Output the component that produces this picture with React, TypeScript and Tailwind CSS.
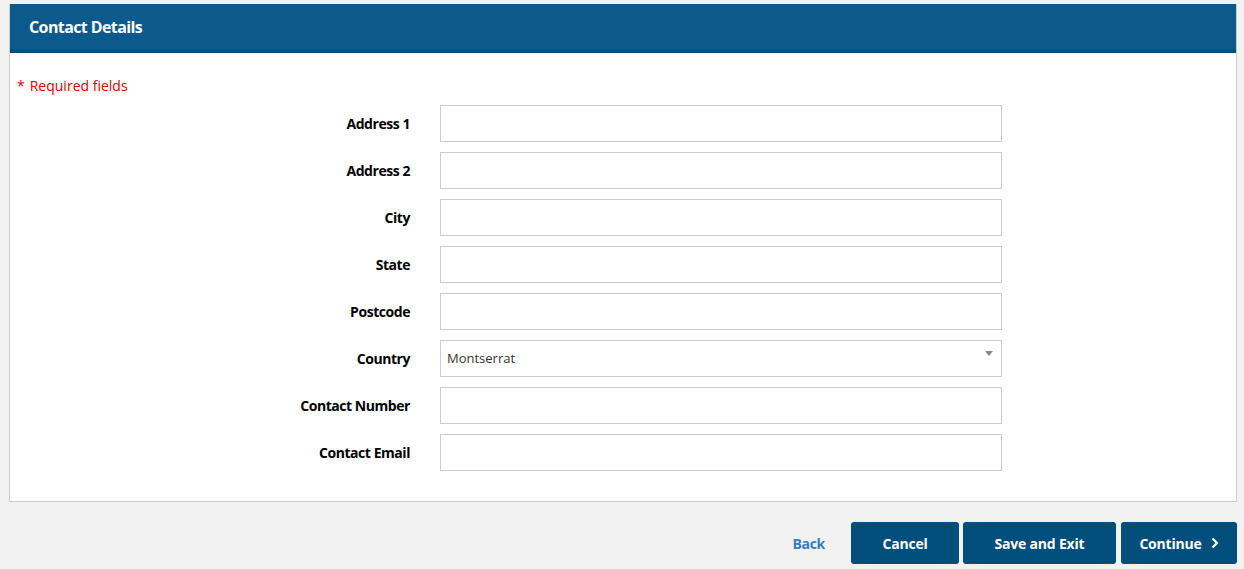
import React from 'react';

const fields = ['Address 1', 'Address 2', 'City', 'State', 'Postcode', 'Country', 'Contact Number', 'Contact Email'];

export default function App() {
  return (
    <div className="min-h-[569px] bg-[#f2f2f2] pt-[4px] px-[9px] pr-[7px]" style={{ fontFamily: '"Open Sans", sans-serif' }}>
      {/* Card */}
      <div className="bg-white border border-[#cccccc] border-t-0">
        <div className="h-[49px] bg-[#0b5a8b] border-b-[4px] border-[#07507d] flex items-center px-[19px]">
          <h2 className="text-white text-[16px] font-bold tracking-[-0.6px]">Contact Details</h2>
        </div>

        <div className="pt-[23px] pb-[30px]">
          <p className="text-[#e00000] text-[14px] leading-[20px] pl-[7px] mb-[9px]">
            <span className="mr-[5px]">*</span>Required fields
          </p>

          <div className="flex flex-col gap-[10px]">
            {fields.map((f) => (
              <div key={f} className="flex items-center">
                <label className="w-[400px] text-right text-[14px] font-bold text-black tracking-[-0.45px]">{f}</label>
                <div className="ml-[30px] w-[562px] h-[37px] border border-[#cccccc] bg-white flex items-center px-[6px] relative">
                  {f === 'Country' && (
                    <>
                      <span className="text-[13px] text-[#333333]">Montserrat</span>
                      <span className="absolute right-[8px] top-[10px] w-0 h-0 border-l-[4px] border-r-[4px] border-t-[5px] border-l-transparent border-r-transparent border-t-[#888888]" />
                    </>
                  )}
                </div>
              </div>
            ))}
          </div>
        </div>
      </div>

      {/* Actions */}
      <div className="flex items-center justify-end mt-[20px] gap-[4px]">
        <a className="text-[#3a7bbf] text-[14px] font-bold mr-[22px] cursor-pointer tracking-[-0.3px]">Back</a>
        <button className="w-[108px] h-[42px] rounded-[3px] bg-[#004e7c] text-white text-[14px] font-bold tracking-[-0.2px]">Cancel</button>
        <button className="w-[153px] h-[42px] rounded-[3px] bg-[#004e7c] text-white text-[14px] font-bold tracking-[-0.2px]">Save and Exit</button>
        <button className="w-[116px] h-[42px] ml-[1px] rounded-[3px] bg-[#004e7c] text-white text-[14px] font-bold tracking-[-0.2px] flex items-center justify-center gap-[9px]">
          Continue
          <svg width="8" height="12" viewBox="0 0 8 12" fill="none">
            <path d="M1.5 1.5 L6 6 L1.5 10.5" stroke="white" strokeWidth="2.2" />
          </svg>
        </button>
      </div>
    </div>
  );
}
